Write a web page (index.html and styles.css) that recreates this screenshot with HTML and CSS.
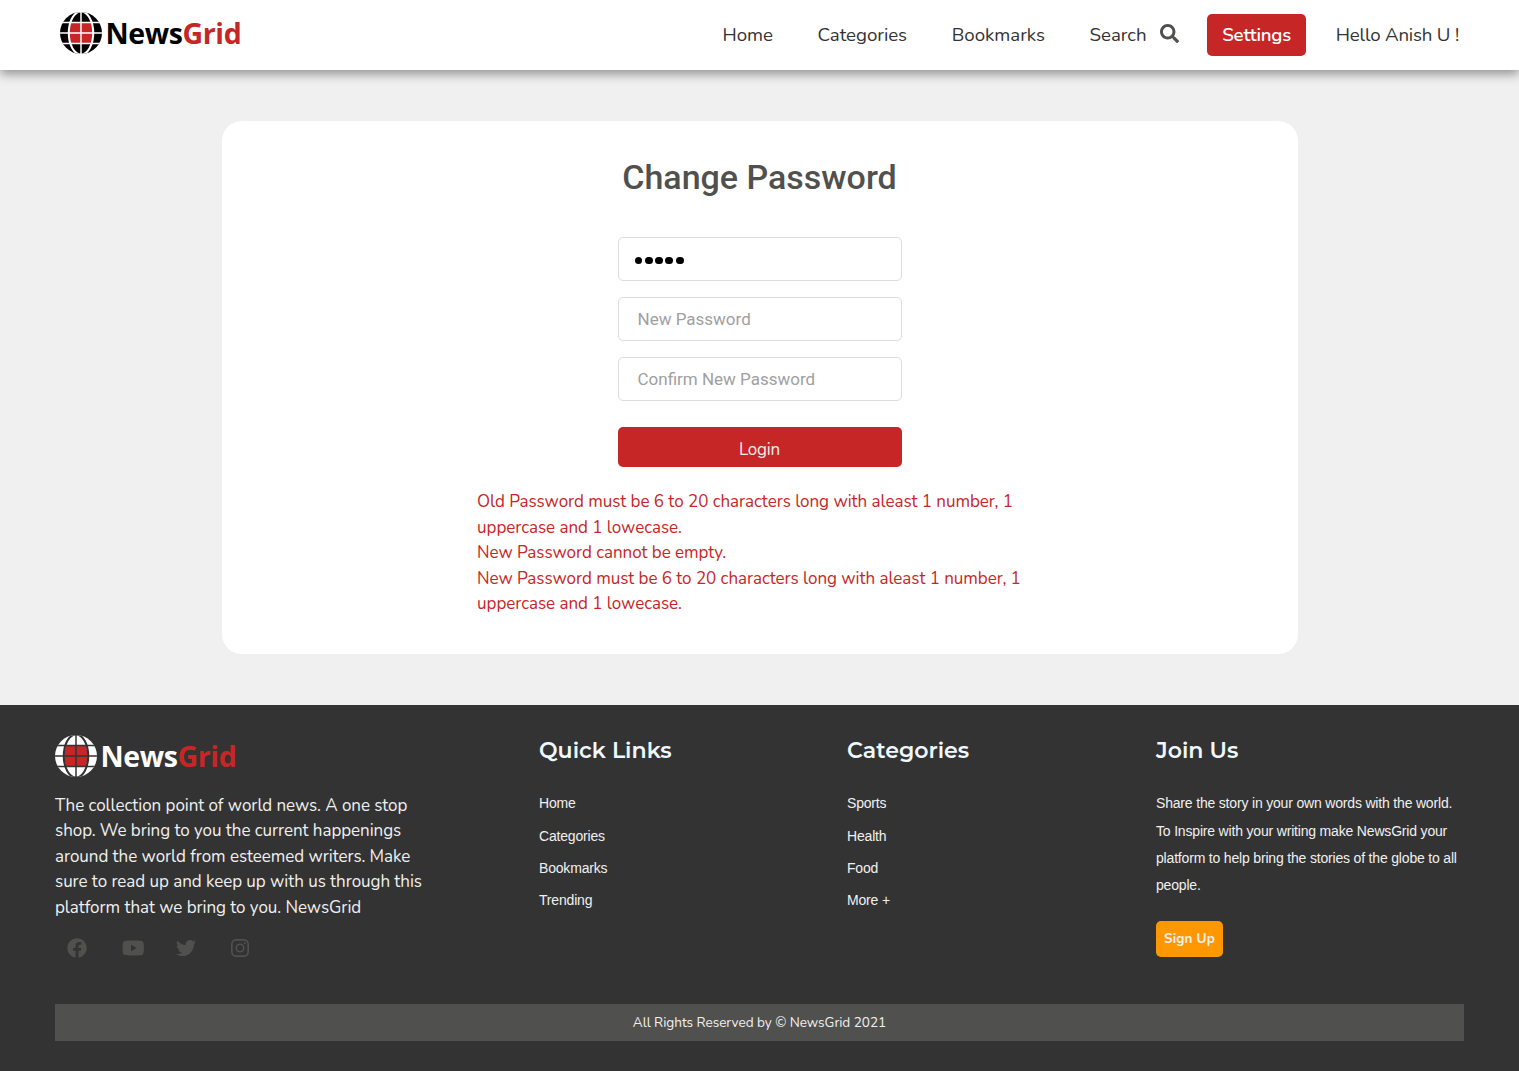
FILE: index.html
```html
<!DOCTYPE html>
<html lang="en">
<head>
<meta charset="utf-8">
<title>NewsGrid - Change Password</title>
<link rel="stylesheet" href="styles.css">
</head>
<body>
<svg class="defs" width="0" height="0" aria-hidden="true">
  <symbol id="globe" viewBox="0 0 42 42">
    <clipPath id="disc"><circle cx="21" cy="21" r="21"/></clipPath>
    <clipPath id="core"><ellipse cx="21" cy="21" rx="11.5" ry="21"/></clipPath>
    <g clip-path="url(#disc)">
      <rect class="land" width="42" height="42"/>
      <rect class="mid" x="9" y="10.5" width="24" height="21" clip-path="url(#core)"/>
      <g class="gap">
        <ellipse cx="21" cy="21" rx="12.2" ry="21.5" stroke-width="2.100"/>
        <path d="M21 0V42M0 10.5H42M0 21H42M0 31.5H42"/>
      </g>
    </g>
  </symbol>
</svg>

<header class="topbar">
  <a class="logo"><svg class="globe" width="42" height="42"><use href="#globe"/></svg><span class="wordmark">News<b>Grid</b></span></a>
  <nav class="nav">
    <a>Home</a>
    <a>Categories</a>
    <a>Bookmarks</a>
    <a class="search">Search<svg width="19" height="19" viewBox="0 0 512 512"><path d="M505 442.7L405.3 343c-4.500-4.500-10.600-7-17-7H372c27.600-35.300 44-79.700 44-128C416 93.100 322.900 0 208 0S0 93.100 0 208s93.100 208 208 208c48.300 0 92.700-16.400 128-44v16.300c0 6.400 2.500 12.500 7 17l99.700 99.700c9.400 9.400 24.600 9.400 33.900 0l28.300-28.300c9.400-9.400 9.400-24.600.1-34zM208 336c-70.700 0-128-57.200-128-128 0-70.700 57.200-128 128-128 70.700 0 128 57.200 128 128 0 70.700-57.200 128-128 128z"/></svg></a>
    <a class="settings">Settings</a>
    <a class="user">Hello Anish U !</a>
  </nav>
</header>

<main class="page">
  <section class="card">
    <h1>Change Password</h1>
    <form class="form">
      <div class="field filled"><i></i><i></i><i></i><i></i><i></i></div>
      <div class="field">New Password</div>
      <div class="field">Confirm New Password</div>
      <button type="button" class="login">Login</button>
    </form>
    <div class="errors">Old Password must be 6 to 20 characters long with aleast 1 number, 1<br>uppercase and 1 lowecase.<br>New Password cannot be empty.<br>New Password must be 6 to 20 characters long with aleast 1 number, 1<br>uppercase and 1 lowecase.</div>
  </section>
</main>

<footer class="footer">
  <div class="columns">
    <div class="about">
      <a class="logo dark"><svg class="globe" width="42" height="42"><use href="#globe"/></svg><span class="wordmark">News<b>Grid</b></span></a>
      <p>The collection point of world news. A one stop<br>shop. We bring to you the current happenings<br>around the world from esteemed writers. Make<br>sure to read up and keep up with us through this<br>platform that we bring to you. NewsGrid</p>
      <div class="social">
        <svg width="20" height="20" viewBox="0 0 512 512"><path d="M504 256C504 119 393 8 256 8S8 119 8 256c0 123.780 90.690 226.380 209.250 245V327.690h-63V256h63v-54.640c0-62.150 37-96.480 93.670-96.480 27.140 0 55.520 4.840 55.520 4.840v61h-31.280c-30.800 0-40.410 19.120-40.410 38.730V256h68.780l-11 71.690h-57.780V501C413.310 482.380 504 379.780 504 256z"/></svg>
        <svg width="22.500" height="20" viewBox="0 0 576 512"><path d="M549.655 124.083c-6.281-23.650-24.787-42.276-48.284-48.597C458.781 64 288 64 288 64S117.220 64 74.629 75.486c-23.497 6.322-42.003 24.947-48.284 48.597-11.412 42.867-11.412 132.305-11.412 132.305s0 89.438 11.412 132.305c6.281 23.650 24.787 41.500 48.284 47.821C117.220 448 288 448 288 448s170.780 0 213.371-11.486c23.497-6.321 42.003-24.171 48.284-47.821 11.412-42.867 11.412-132.305 11.412-132.305s0-89.438-11.412-132.305zm-317.510 213.508V175.185l142.739 81.205-142.739 81.201z"/></svg>
        <svg width="20" height="20" viewBox="0 0 512 512"><path d="M459.370 151.716c.325 4.548.325 9.097.325 13.645 0 138.720-105.583 298.558-298.558 298.558-59.452 0-114.680-17.219-161.137-47.106 8.447.974 16.568 1.299 25.340 1.299 49.055 0 94.213-16.568 130.274-44.832-46.132-.975-84.792-31.188-98.112-72.772 6.498.974 12.995 1.624 19.818 1.624 9.421 0 18.843-1.300 27.614-3.573-48.081-9.747-84.143-51.980-84.143-102.985v-1.299c13.969 7.797 30.214 12.670 47.431 13.319-28.264-18.843-46.781-51.005-46.781-87.391 0-19.492 5.197-37.360 14.294-52.954 51.655 63.675 129.300 105.258 216.365 109.807-1.624-7.797-2.599-15.918-2.599-24.040 0-57.828 46.782-104.934 104.934-104.934 30.213 0 57.502 12.670 76.670 33.137 23.715-4.548 46.456-13.320 66.599-25.340-7.798 24.366-24.366 44.833-46.132 57.827 21.117-2.273 41.584-8.122 60.426-16.243-14.292 20.791-32.161 39.308-52.628 54.253z"/></svg>
        <svg width="18" height="18" viewBox="0 0 24 24"><g fill="none" stroke="#50504e" stroke-width="2.200"><rect x="1.100" y="1.100" width="21.800" height="21.800" rx="6"/><circle cx="12" cy="12" r="5"/></g><circle cx="18.300" cy="5.700" r="1.400"/></svg>
      </div>
    </div>
    <div class="col">
      <h2>Quick Links</h2>
      <ul><li>Home</li><li>Categories</li><li>Bookmarks</li><li>Trending</li></ul>
    </div>
    <div class="col">
      <h2>Categories</h2>
      <ul><li>Sports</li><li>Health</li><li>Food</li><li>More +</li></ul>
    </div>
    <div class="col join">
      <h2>Join Us</h2>
      <p>Share the story in your own words with the world.<br>To Inspire with your writing make NewsGrid your<br>platform to help bring the stories of the globe to all<br>people.</p>
      <a class="signup">Sign Up</a>
    </div>
  </div>
  <div class="legal">All Rights Reserved by © NewsGrid 2021</div>
</footer>
</body>
</html>
```
FILE: styles.css
```css
* { box-sizing: border-box; }
body { margin: 0; background: #f0f0f0; color: #333; font-family: Nunito, Lato, sans-serif; font-size: 17px; line-height: 1.5; }
.defs { position: absolute; }
.topbar { position: relative; height: 70px; padding: 0 45px 0 60px; background: #fff; box-shadow: 0 4px 10px rgba(0,0,0,.4); display: flex; justify-content: space-between; }
.logo { display: flex; align-items: flex-start; height: 42px; }
.topbar .logo { margin-top: 12px; }
.globe { --land: #000; --gap: #fff; flex: none; }
.dark .globe { --land: #fff; --gap: #333; }
.land { fill: var(--land); }
.mid { fill: #c72626; }
.gap { fill: none; stroke: var(--gap); stroke-width: 1.500; }
.wordmark { margin-left: 3.600px; color: #000; font: 700 28.500px/42px "Open Sans", sans-serif; letter-spacing: -.4px; white-space: nowrap; }
.wordmark b { color: #c72626; font-weight: 700; }
.dark .wordmark { color: #fff; }
.nav { display: flex; align-items: center; gap: 14.700px; font-size: 18.700px; letter-spacing: -.04px; white-space: nowrap; }
.nav a { height: 42px; line-height: 42px; padding: 0 15px; display: flex; align-items: center; }
.search svg { margin: -3px -1px 0 13px; fill: #50504e; }
.nav .settings { background: #c72626; color: #fff; border-radius: 5px; font-weight: 600; letter-spacing: -.2px; }
.nav .user { letter-spacing: -.19px; }
.page { padding: 51px 0; }
.card { width: 1076px; height: 533px; margin: 0 auto; padding-top: 31px; background: #fff; border-radius: 20px; }
.card h1 { margin: 0; text-align: center; color: #50504e; font: 500 34px/51px Roboto, sans-serif; }
.form { width: 284px; margin: 34px auto 0; }
.field { height: 44px; margin-bottom: 16px; padding: 0 19px; border: 1px solid #ddd; border-radius: 5px; font: 17px/43px Roboto, sans-serif; color: #a0a0a0; }
.filled { display: flex; align-items: center; gap: 2.650px; padding: 3px 0 0 16px; }
.filled i { width: 7.700px; height: 7.700px; border-radius: 50%; background: #000; }
.login { width: 284px; height: 40px; margin-top: 26px; display: block; border: 0; border-radius: 5px; background: #c72626; color: #f0f0f0; font: 17px/42px Nunito, Lato, sans-serif; letter-spacing: -.2px; padding: 2px 0 0; }
.errors { width: 565px; margin: 22px auto 0; color: #c72626; line-height: 25.500px; letter-spacing: -.035px; white-space: nowrap; }
.footer { height: 366px; padding: 30px 55px; background: #333; color: #f0f0f0; }
.columns { display: grid; grid-template-columns: 484px 308px 309px 1fr; height: 269px; }
.about p { margin: 15.600px 0 0; line-height: 25.500px; letter-spacing: -.05px; white-space: nowrap; }
.social { display: grid; grid-template-columns: repeat(4, 54.600px); align-items: center; margin: 18.400px 0 0 12px; fill: #50504e; }
.col h2 { margin: 1px 0 0; color: #f0f8ff; font: 600 22.100px/30px Montserrat, Inter, sans-serif; }
.col ul { list-style: none; margin: 21.400px 0 0; padding: 0; font: 14px/32.300px "Liberation Sans", Arial, sans-serif; letter-spacing: -.18px; }
.join p { margin: 24.400px 0 0; font: 14px/27.200px "Liberation Sans", Arial, sans-serif; letter-spacing: -.18px; white-space: nowrap; }
.signup { display: inline-block; margin-top: 21.800px; height: 36px; padding: 0 8px; border-radius: 5px; background: #ff9800; font: 700 13.600px/36px Nunito, Lato, sans-serif; letter-spacing: .12px; }
.legal { height: 37px; background: #50504e; text-align: center; font-size: 13.600px; letter-spacing: -.04px; line-height: 37px; }
```
